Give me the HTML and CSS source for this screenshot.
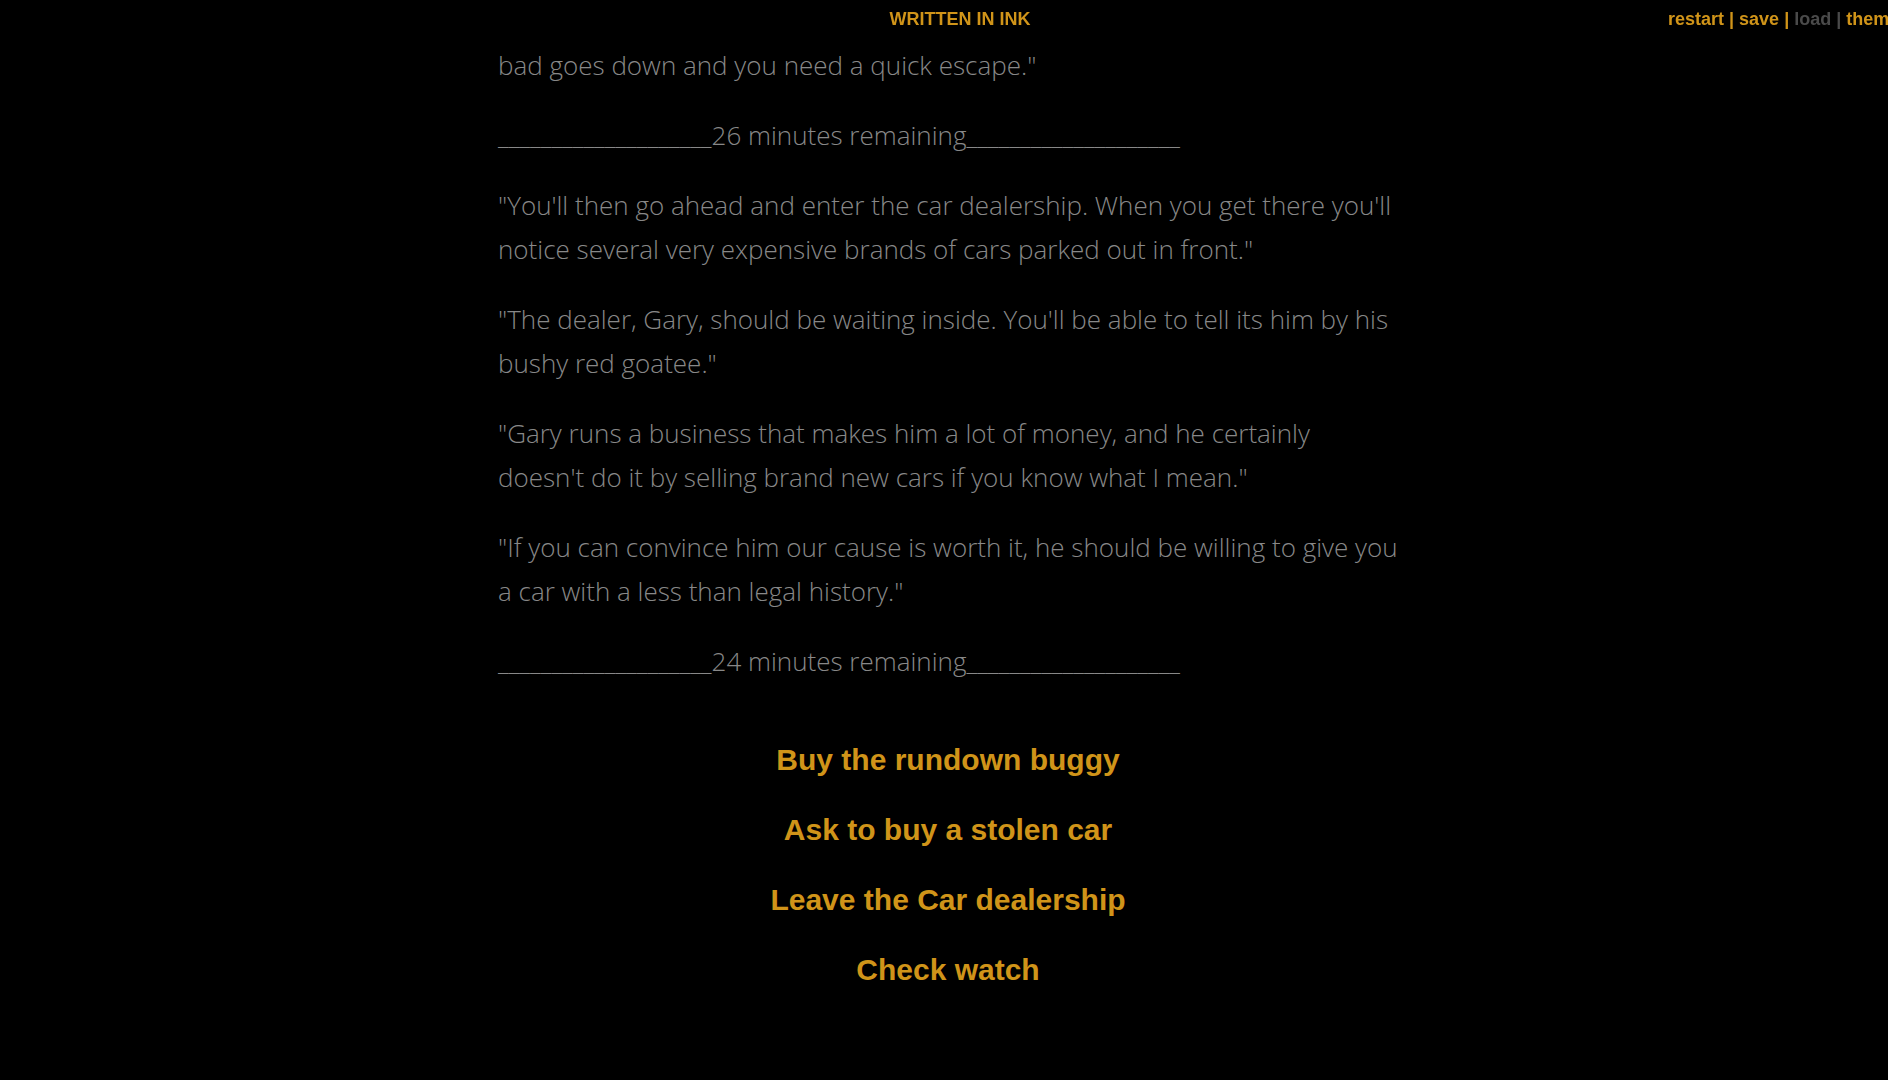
FILE: index.html
```html
<!DOCTYPE html>
<html lang="en">
<head>
<meta charset="utf-8">
<title>Written in Ink</title>
<link rel="stylesheet" href="styles.css">
</head>
<body>
<h1 class="written-in-ink">WRITTEN IN INK</h1>
<div class="controls"><a class="ctl">restart</a> | <a class="ctl">save</a> | <span class="disabled">load |</span> <a class="ctl">theme</a></div>
<div class="container">
  <p class="story">bad goes down and you need a quick escape."</p>
  <p class="story">____________________26 minutes remaining____________________</p>
  <p class="story">"You'll then go ahead and enter the car dealership. When you get there you'll notice several very expensive brands of cars parked out in front."</p>
  <p class="story">"The dealer, Gary, should be waiting inside. You'll be able to tell its him by his bushy red goatee."</p>
  <p class="story">"Gary runs a business that makes him a lot of money, and he certainly doesn't do it by selling brand new cars if you know what I mean."</p>
  <p class="story">"If you can convince him our cause is worth it, he should be willing to give you a car with a less than legal history."</p>
  <p class="story">____________________24 minutes remaining____________________</p>
  <div class="choices">
    <p class="choice"><a href="#">Buy the rundown buggy</a></p>
    <p class="choice"><a href="#">Ask to buy a stolen car</a></p>
    <p class="choice"><a href="#">Leave the Car dealership</a></p>
    <p class="choice"><a href="#">Check watch</a></p>
  </div>
</div>
</body>
</html>
```
FILE: styles.css
```css
html, body {
  margin: 0;
  padding: 0;
  background: #000;
  overflow: hidden;
  height: 100%;
}

.written-in-ink {
  position: fixed;
  top: 0;
  left: 0;
  width: 100%;
  margin: 0;
  padding: 9px 0 0 32px;
  box-sizing: border-box;
  text-align: center;
  font-family: "Liberation Sans", Arial, sans-serif;
  font-weight: 700;
  font-size: 18px;
  line-height: 21px;
  color: #d09419;
  z-index: 3;
}

.controls {
  position: fixed;
  top: 9px;
  left: 1668px;
  white-space: nowrap;
  font-family: "Liberation Sans", Arial, sans-serif;
  font-weight: 700;
  font-size: 18px;
  line-height: 21px;
  color: #d09419;
  z-index: 4;
}

.controls .ctl {
  color: #d09419;
  text-decoration: none;
}

.controls .disabled {
  color: #4a4a4a;
}

.container {
  width: 900px;
  margin-left: calc(50% - 446px);
  padding-top: 43px;
}

.story {
  margin: 0 0 26px 0;
  font-family: "Open Sans", sans-serif;
  font-weight: 300;
  font-size: 26px;
  line-height: 44px;
  color: #888;
}

.choices {
  padding-top: 29px;
}

.choice {
  margin: 0 0 26px 0;
  text-align: center;
  font-family: "Liberation Sans", Arial, sans-serif;
  font-weight: 700;
  font-size: 30px;
  line-height: 44px;
}

.choice a {
  color: #d09419;
  text-decoration: none;
}
```
